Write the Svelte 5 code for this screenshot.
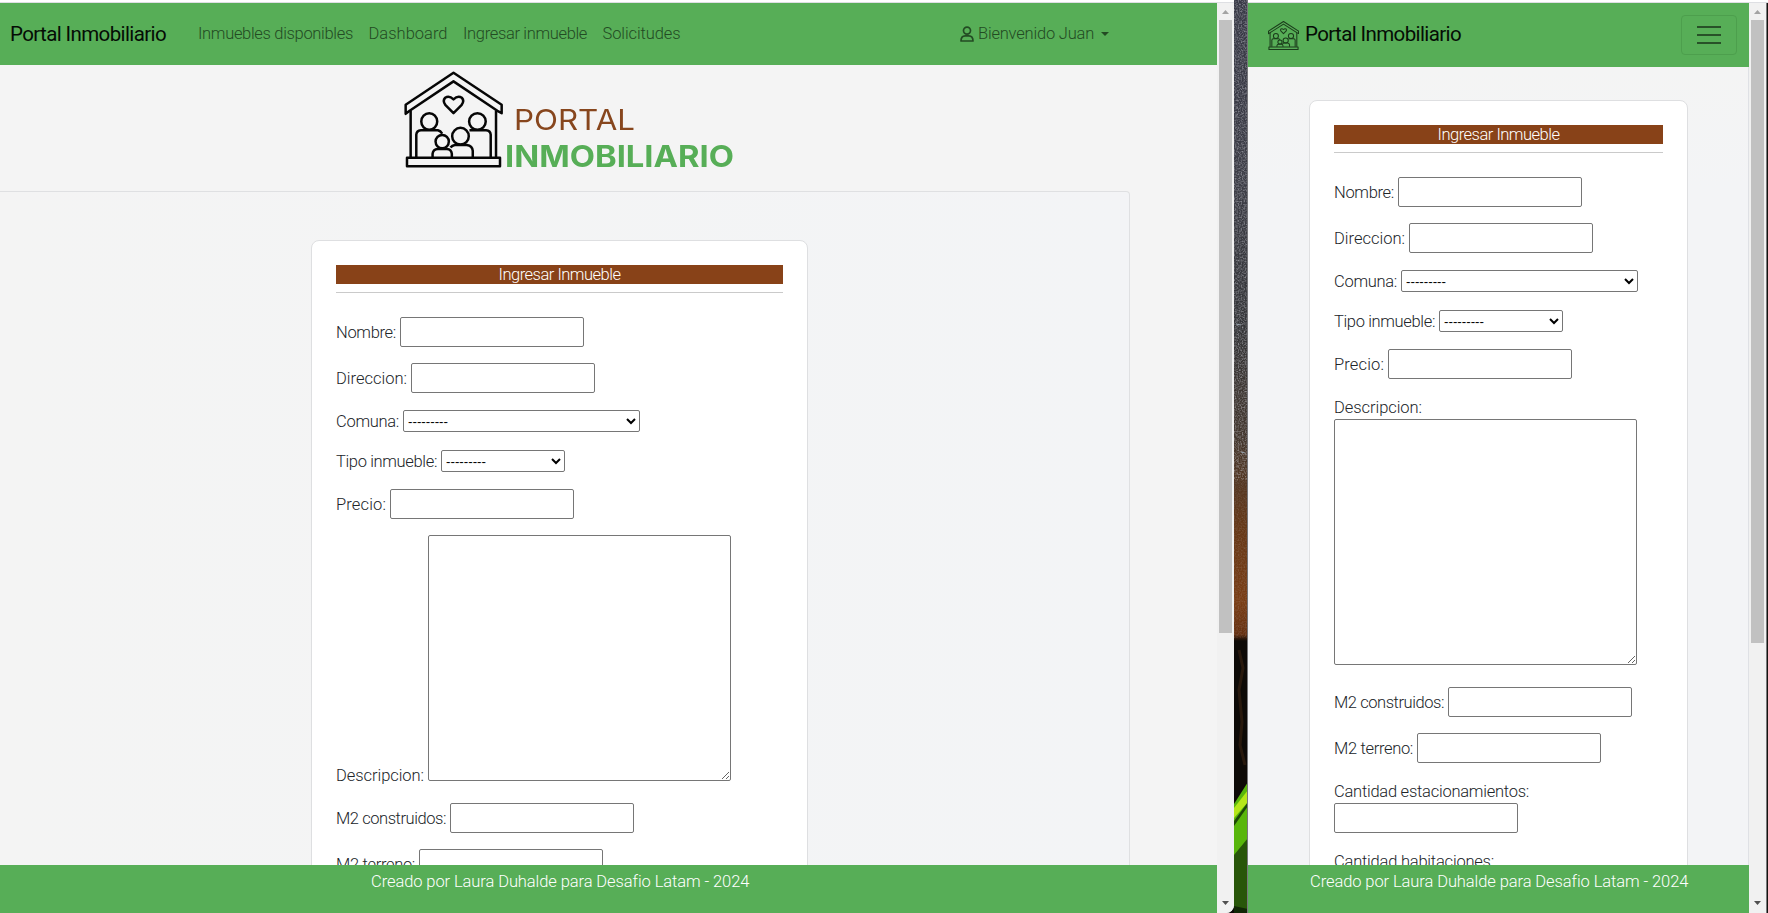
<script>
  // Spreads a label's letters so that it takes exactly the given width.
  function fit(node, width) {
    node.style.letterSpacing = '0px';
    const natural = node.getBoundingClientRect().width;
    node.style.letterSpacing = (width - natural) / node.textContent.length + 'px';
  }

  // Widens the letters themselves, for the wordmark.
  function widen(node, width) {
    const natural = node.getBoundingClientRect().width;
    node.style.transform = `scaleX(${width / natural})`;
  }

  const links = [
    { text: 'Inmuebles disponibles', w: 155 },
    { text: 'Dashboard', w: 79 },
    { text: 'Ingresar inmueble', w: 124 },
    { text: 'Solicitudes', w: 78 }
  ];

  const fields = [
    { text: 'Nombre:', w: 60, kind: 'input' },
    { text: 'Direccion:', w: 71, kind: 'input' },
    { text: 'Comuna:', w: 63, kind: 'select', size: 237 },
    { text: 'Tipo inmueble:', w: 101, kind: 'select', size: 124 },
    { text: 'Precio:', w: 50, kind: 'input' },
    { text: 'Descripcion:', w: 88, kind: 'area' },
    { text: 'M2 construidos:', w: 110, kind: 'input' },
    { text: 'M2 terreno:', w: 79, kind: 'input' }
  ];
  const moreFields = [
    ...fields,
    { text: 'Cantidad estacionamientos:', w: 195, kind: 'input', stack: true },
    { text: 'Cantidad habitaciones:', w: 160, kind: 'input', stack: true }
  ];
</script>

{#snippet house(cls, stroke)}
  <svg class={cls} viewBox="43 32 298 290" preserveAspectRatio="none" fill="none" stroke="currentColor" stroke-width={stroke} stroke-linejoin="round">
    <path d="M192 37 L337 133 V158 L324 151 L192 63 L60 151 L48 160 V133 Z" />
    <path d="M63 150 V290 M80 290 V222 Q81 210 94 209 H145 Q153 211 158 219 M320 150 V290 M304 290 V222 Q303 210 290 209 H240" />
    <rect x="52" y="291" width="280" height="26" />
    <path d="M192 158 L168 134 Q158 121 167 112 Q179 104 192 117 Q205 104 217 112 Q226 121 216 134 Z" />
    <ellipse cx="119" cy="183" rx="24" ry="25" />
    <ellipse cx="264" cy="183" rx="25" ry="25" />
    <circle cx="213" cy="227" r="25" />
    <circle cx="158" cy="243" r="20" />
    <path d="M129 290 V280 Q130 266 145 265 H172 Q186 266 187 280 V290" />
    <path d="M183 261 Q188 254 196 253 H232 Q249 255 250 271 V290" />
  </svg>
{/snippet}

{#snippet form(rows)}
  <section class="card">
    <h1><span use:fit={122}>Ingresar Inmueble</span></h1>
    <hr />
    {#each rows as f}
      <div class="row {f.kind}" class:stack={f.stack}>
        <label><span use:fit={f.w}>{f.text}</span></label>
        {#if f.kind === 'select'}
          <select style:width="{f.size}px"><option>---------</option></select>
        {:else if f.kind === 'area'}
          <textarea></textarea>
        {:else}
          <input type="text" />
        {/if}
      </div>
    {/each}
  </section>
{/snippet}

{#snippet scrollbar(thumb)}
  <div class="bar">
    <svg width="17" height="17" viewBox="0 0 17 17"><path d="M5 11 L8.5 7 L12 11Z" fill="#a3a3a3" /></svg>
    <div class="thumb" style:height="{thumb}px"></div>
    <svg class="down" width="17" height="17" viewBox="0 0 17 17"><path d="M5 6 L8.5 10 L12 6Z" fill="#505050" /></svg>
  </div>
{/snippet}

{#snippet footer()}
  <footer><span use:fit={378}>Creado por Laura Duhalde para Desafio Latam - 2024</span></footer>
{/snippet}

<div class="screen">
  <div class="window wide">
    <div class="edge"></div>
    <div class="body">
      <div class="page">
        <nav>
          <b><span use:fit={156}>Portal Inmobiliario</span></b>
          <div class="links">
            {#each links as l}<a href="#top"><span use:fit={l.w}>{l.text}</span></a>{/each}
          </div>
          <div class="user">
            <svg width="14" height="16" viewBox="0 0 14 16" fill="none" stroke="currentColor" stroke-width="1.7"><circle cx="7" cy="4.6" r="3.5" /><path d="M1 15 Q1 9.8 5.2 9.8 H8.8 Q13 9.8 13 15 Z" stroke-linejoin="round" /></svg>
            <span use:fit={116}>Bienvenido Juan</span>
            <i></i>
          </div>
        </nav>
        <main>
          <div class="logo">
            {@render house('mark', 7.5)}
            <div class="words">
              <div class="portal"><span use:widen={121}>PORTAL</span></div>
              <div class="inmo"><span use:widen={229}>INMOBILIARIO</span></div>
            </div>
          </div>
          <div class="panel">{@render form(fields)}</div>
        </main>
        {@render footer()}
      </div>
      {@render scrollbar(613)}
    </div>
  </div>

  <svg class="desktop" width="14" height="913" viewBox="0 0 14 913">
    <defs>
      <linearGradient id="sky" x1="0" y1="0" x2="0" y2="1">
        <stop offset="0" stop-color="#383946" />
        <stop offset=".2" stop-color="#3c3d46" />
        <stop offset=".36" stop-color="#353639" />
        <stop offset=".48" stop-color="#43372e" />
        <stop offset=".58" stop-color="#663817" />
        <stop offset=".66" stop-color="#7a3e16" />
        <stop offset=".695" stop-color="#653112" />
        <stop offset=".702" stop-color="#0d0a07" />
        <stop offset="1" stop-color="#0d0a07" />
      </linearGradient>
      <filter id="grain" x="0" y="0" width="100%" height="100%">
        <feTurbulence type="fractalNoise" baseFrequency=".7" numOctaves="2" seed="4" />
        <feColorMatrix values="0 0 0 0 .6  0 0 0 0 .6  0 0 0 0 .65  1.2 0 0 0 -.48" />
      </filter>
    </defs>
    <rect width="14" height="913" fill="url(#sky)" />
    <rect width="14" height="480" filter="url(#grain)" />
    <rect y="480" width="14" height="158" filter="url(#grain)" opacity=".35" />
    <path d="M5 650 L9 668 L5 690 L8 722 L6 745 L11 765" fill="none" stroke="#3a2312" stroke-width="3" opacity=".6" />
    <path d="M0 804 L14 782 V913 H0Z" fill="#58b60b" />
    <path d="M0 808 L14 790 V802 L0 818Z" fill="#b5e619" />
    <path d="M0 821 L14 802 V806 L0 826Z" fill="#1c4806" />
    <path d="M0 855 L14 838 V913 H0Z" fill="#285609" />
    <path d="M0 906 L14 909 V913 H0Z" fill="#112705" />
    <path d="M2 324 L7 325 M7 452 L11 453" stroke="#98a4ad" />
    <path d="M13.5 0 V913" stroke="#77777b" />
  </svg>

  <div class="window narrow">
    <div class="edge"></div>
    <div class="body">
      <div class="page">
        <nav>
          {@render house('small', 10)}
          <b><span use:fit={156}>Portal Inmobiliario</span></b>
          <button aria-label="Menu"><i></i><i></i><i></i></button>
        </nav>
        <main><div class="panel">{@render form(moreFields)}</div></main>
        {@render footer()}
      </div>
      {@render scrollbar(623)}
      <div class="frame"></div>
    </div>
  </div>
</div>

<style>
  :global(body) { margin: 0; overflow: hidden; background: #0d0a07; }
  * { box-sizing: border-box; }
  .screen { display: grid; grid-template-columns: 1234px 14px 520px; height: 913px; font: 300 16.5px/24px Roboto, "Liberation Sans", Arial, sans-serif; color: #212529; }
  .window { display: flex; flex-direction: column; height: 913px; overflow: hidden; background: #f4f4f4; }
  .wide { border-bottom-right-radius: 8px; }
  .edge { height: 3px; flex: none; background: #fff; border-bottom: 1px solid #dedfe3; }
  .body { display: flex; height: 910px; }
  .page { display: flex; flex-direction: column; flex: 1; min-width: 0; height: 910px; }
  span { white-space: nowrap; display: inline-block; }

  nav { display: flex; align-items: center; flex: none; height: 62px; background: #57ae57; color: #234b23; }
  .wide nav { padding-left: 10px; }
  nav b { font-weight: 400; font-size: 20.5px; color: #050c05; }
  .links { display: flex; gap: 15.5px; margin-left: 32px; width: 762px; flex: none; }
  a { color: inherit; text-decoration: none; }
  .user { display: flex; align-items: center; gap: 4px; }
  .user i { border: 4.5px solid transparent; border-top-color: currentColor; border-bottom: 0; margin-left: 3px; }

  main { flex: 1; min-height: 0; overflow: hidden; }
  .logo { display: flex; height: 126px; padding: 6px 0 0 404px; }
  .logo :global(.mark) { width: 99px; height: 97px; color: #060606; flex: none; }
  .words { font-family: Inter, sans-serif; padding-top: 31px; margin-left: 2px; line-height: 36px; }
  .words span { transform-origin: 0 50%; }
  .portal { font-size: 28px; font-weight: 400; color: #87461d; padding-left: 9px; }
  .inmo { font-size: 29.5px; font-weight: 700; color: #57ae57; }
  .wide .panel { width: 1130px; height: 780px; border: 1px solid #dfe0e2; border-left: 0; border-top-right-radius: 4px; padding: 48px 0 0 311px; background: linear-gradient(90deg, #f4f4f4, #f3f4f6); }

  .card { background: #fff; border: 1px solid #dedfe1; border-radius: 8px; padding: 24px; height: 900px; }
  .wide .card { width: 497px; }
  h1 { margin: 0; font: inherit; height: 19px; line-height: 19px; text-align: center; background: #884218; color: #fff; }
  hr { margin: 8px 0 24px; border: 0; height: 1px; background: #cacaca; }
  .row { display: flex; align-items: center; gap: 4px; margin-bottom: 16px; height: 30px; }
  .row.select { height: 24px; }
  label { flex: none; padding-top: 1px; height: 24px; }
  input { width: 184px; height: 30px; flex: none; margin: 0; background: #fff; border: 1px solid #767676; border-radius: 2px; }
  select { height: 22px; margin: 0; background: #fff; color: #000; border: 1px solid #767676; border-radius: 2px; font: 13.33px "Liberation Sans", Arial, sans-serif; }
  textarea { width: 303px; height: 246px; margin: 0; flex: none; background: #fff; border: 1px solid #767676; border-radius: 2px; }
  .row.area { height: 252px; align-items: flex-start; }
  .wide .area label { padding-top: 229px; }
  .narrow .row.area, .row.stack { flex-direction: column; align-items: flex-start; gap: 0; }
  .narrow .row.area { height: 276px; }
  .row.stack { height: 54px; }

  footer { height: 48px; flex: none; background: #57ae57; color: #fff; padding-top: 5px; }
  .wide footer { padding-left: 371px; }
  .narrow footer { padding-left: 62px; }

  .bar { display: flex; flex-direction: column; align-items: center; width: 17px; flex: none; background: #f1f1f1; }
  .bar svg { flex: none; }
  .thumb { width: 13px; background: #c1c1c1; }
  .down { margin-top: auto; margin-bottom: 1px; }

  .narrow nav { height: 64px; padding: 0 12px 0 20px; }
  .narrow nav :global(.small) { width: 31px; height: 29px; margin-top: 1px; color: #1b3b1b; }
  .narrow nav b { margin: 0 0 2px 6px; }
  button { display: flex; flex-direction: column; align-items: center; justify-content: center; gap: 6px; margin-left: auto; width: 56px; height: 40px; padding: 0; background: none; border: 1px solid #4d9f4d; border-radius: 4px; }
  button i { width: 24px; height: 2px; background: #285128; }
  .narrow .panel { height: 798px; padding: 33px 60px 0 61px; border-right: 1px solid #dfe1e5; background: linear-gradient(#f4f4f4, #f3f4f6 120px); }
  .frame { width: 2px; background: #15130f; border-left: 1px solid #78787b; }
</style>
